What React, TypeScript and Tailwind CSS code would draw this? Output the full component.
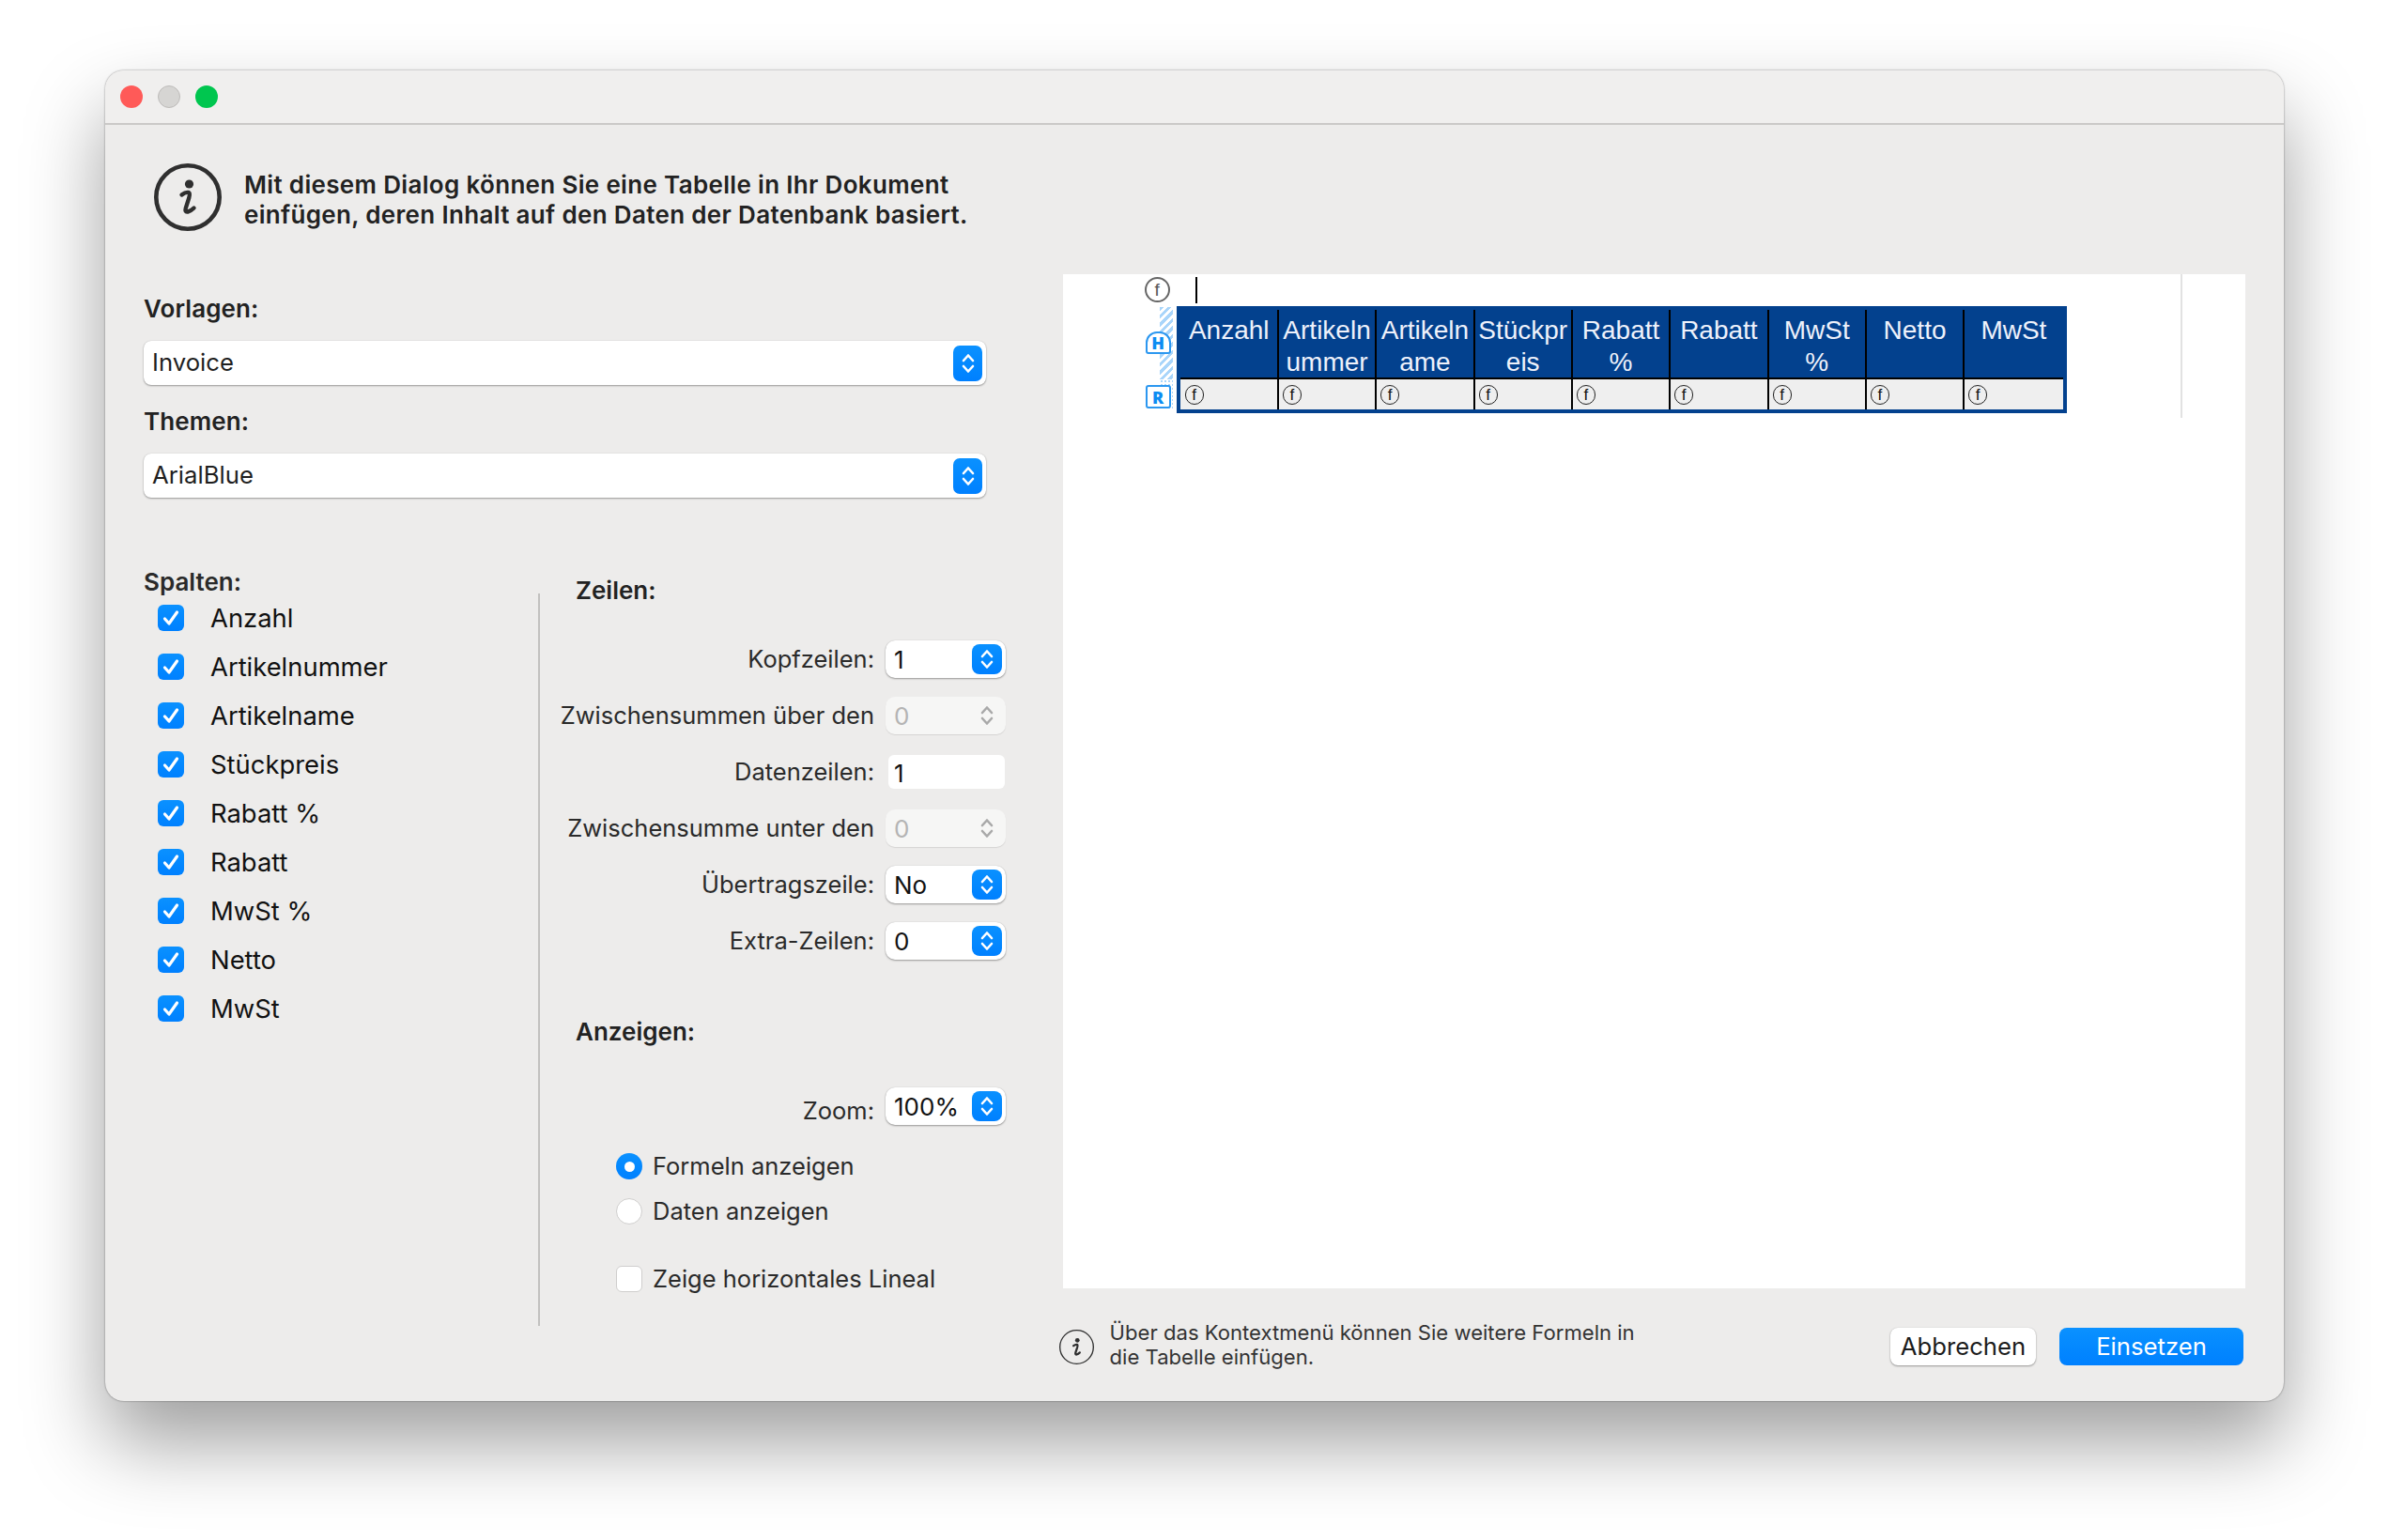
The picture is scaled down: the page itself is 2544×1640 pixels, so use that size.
import React from "react";

const columns = ["Anzahl", "Artikelnummer", "Artikelname", "Stückpreis", "Rabatt %", "Rabatt", "MwSt %", "Netto", "MwSt"];

const headerCells = [
  ["Anzahl"],
  ["Artikeln", "ummer"],
  ["Artikeln", "ame"],
  ["Stückpr", "eis"],
  ["Rabatt", "%"],
  ["Rabatt"],
  ["MwSt", "%"],
  ["Netto"],
  ["MwSt"],
];

function Chevrons({ color = "white" }: { color?: string }) {
  return (
    <svg width="14" height="24" viewBox="0 0 14 24" fill="none" stroke={color} strokeWidth="2.6" strokeLinecap="round" strokeLinejoin="round">
      <path d="M2 9 L7 3.5 L12 9" />
      <path d="M2 15 L7 20.5 L12 15" />
    </svg>
  );
}

function InfoIcon({ size, stroke }: { size: number; stroke: number }) {
  return (
    <svg width={size} height={size} viewBox="0 0 72 72" fill="none">
      <circle cx="36" cy="36" r={36 - stroke / 2} stroke="#2f2f2f" strokeWidth={stroke} />
      <circle cx="37.5" cy="22" r="4.6" fill="#2f2f2f" />
      <path d="M29.5 33.5 C32 31.5 35 30.5 37 31 C38.5 31.5 38 34 37.2 37 L33.8 47.5 C33 50.5 33.6 52 36 51.5 C38 51 40.5 49.5 42.5 47.5" stroke="#2f2f2f" strokeWidth="4.4" strokeLinecap="round" />
    </svg>
  );
}

function WideSelect({ value }: { value: string }) {
  return (
    <div className="flex h-[47px] w-[897px] items-center justify-between rounded-[8px] bg-white pl-[9px] pr-[4px] text-[25.7px] leading-[44px] text-[#1f1f1f] shadow-[0_1px_2px_rgba(0,0,0,0.35),0_0_1px_rgba(0,0,0,0.2)]">
      <span className="-mt-[2px]">{value}</span>
      <span className="flex h-[38px] w-[31px] items-center justify-center rounded-[7px] bg-gradient-to-b from-[#0b91ff] to-[#0080ff]">
        <Chevrons />
      </span>
    </div>
  );
}

function Stepper({ value, disabled }: { value: string; disabled?: boolean }) {
  if (disabled) {
    return (
      <div className="flex h-[40px] w-[128px] items-center justify-between rounded-[10px] bg-[#f6f6f5] pl-[9px] pr-[4px] text-[26px] text-[#b4b4b4] shadow-[0_1px_1px_rgba(0,0,0,0.1)]">
        <span>{value}</span>
        <span className="flex h-[32px] w-[32px] items-center justify-center">
          <Chevrons color="#a9a9a9" />
        </span>
      </div>
    );
  }
  return (
    <div className="flex h-[40px] w-[128px] items-center justify-between rounded-[10px] bg-white pl-[9px] pr-[4px] text-[26px] text-[#111111] shadow-[0_1px_2px_rgba(0,0,0,0.35),0_0_1px_rgba(0,0,0,0.2)]">
      <span>{value}</span>
      <span className="flex h-[32px] w-[32px] items-center justify-center rounded-[8px] bg-gradient-to-b from-[#0b91ff] to-[#0080ff]">
        <Chevrons />
      </span>
    </div>
  );
}

function FormRow({ label, children }: { label: string; children: React.ReactNode }) {
  return (
    <div className="flex h-[40px] items-center justify-end gap-[12px]">
      <span className="whitespace-nowrap text-[25.5px] text-[#2a2a2a]">{label}</span>
      {children}
    </div>
  );
}

function Formula({ tall }: { tall?: boolean }) {
  if (tall) {
    return (
      <span className="flex h-[21px] w-[20px] items-center justify-center rounded-full border border-[#222222] font-['Liberation_Sans',sans-serif] text-[17px] leading-none text-[#111111]">
        f
      </span>
    );
  }
  return (
    <span className="flex h-[27px] w-[27px] items-center justify-center rounded-full border-2 border-[#666666] font-['Liberation_Sans',sans-serif] text-[19px] leading-none text-[#555555]">
      f
    </span>
  );
}

function DocTable() {
  return (
    <div className="w-[948px] border-4 border-[#03418e] font-['Liberation_Sans',sans-serif]">
      <div className="grid h-[74px] grid-cols-9 border-b-2 border-black bg-[#03418e] pl-[1px]">
        {headerCells.map((lines, i) => (
          <div key={i} className={`pt-[5px] text-center text-[28px] leading-[34px] text-[#eef1fb] ${i < 8 ? "border-r-2 border-black" : ""}`}>
            {lines.map((line) => (
              <div key={line} className="whitespace-nowrap">
                {line}
              </div>
            ))}
          </div>
        ))}
      </div>
      <div className="grid h-[32px] grid-cols-9 bg-[#efefef] pl-[1px]">
        {headerCells.map((_, i) => (
          <div key={i} className={`flex items-center pl-[4px] ${i < 8 ? "border-r-2 border-black" : ""}`}>
            <Formula tall />
          </div>
        ))}
      </div>
    </div>
  );
}

export default function App() {
  return (
    <div className="min-h-[1640px] bg-white pl-[112px] pt-[75px] font-['Inter','Noto_Sans',sans-serif]">
      <div className="w-[2320px] overflow-hidden rounded-[20px] bg-[#edeceb] shadow-[0_44px_84px_rgba(0,0,0,0.38),0_0_2px_rgba(0,0,0,0.5)]">
        <div className="flex h-[58px] items-center gap-[16px] border-b-2 border-[#cbc9c7] bg-[#f0efee] pl-[16px]">
          <span className="h-[24px] w-[24px] rounded-full bg-[#ff5a58]" />
          <span className="h-[24px] w-[24px] rounded-full border border-[#bdbbb9] bg-[#d6d5d3]" />
          <span className="h-[24px] w-[24px] rounded-full bg-[#00c64f]" />
        </div>

        <div className="px-[41px]">
          <div className="flex h-[159px] gap-[24px] pl-[11px] pt-[41px]">
            <InfoIcon size={72} stroke={4.6} />
            <p className="mt-[7px] text-[26px] font-semibold leading-[32px] tracking-[0.33px] text-[#222222]">
              Mit diesem Dialog können Sie eine Tabelle in Ihr Dokument
              <br />
              einfügen, deren Inhalt auf den Daten der Datenbank basiert.
            </p>
          </div>

          <div className="flex">
            <div className="w-[979px]">
              <div className="mt-[21px] text-[26px] font-semibold leading-[32px] tracking-[0.1px] text-[#222222]">Vorlagen:</div>
              <div className="mt-[18px]">
                <WideSelect value="Invoice" />
              </div>
              <div className="mt-[23px] text-[26px] font-semibold leading-[32px] tracking-[0.1px] text-[#222222]">Themen:</div>
              <div className="mt-[18px]">
                <WideSelect value="ArialBlue" />
              </div>

              <div className="mt-[76px] flex">
                <div className="w-[420px]">
                  <div className="text-[26px] font-semibold leading-[28px] text-[#2a2a2a]">Spalten:</div>
                  <div className="ml-[15px] mt-[10px] flex flex-col gap-[24px]">
                    {columns.map((name) => (
                      <div key={name} className="flex h-[28px] items-center gap-[28px]">
                        <span className="flex h-[28px] w-[28px] items-center justify-center rounded-[6px] bg-gradient-to-b from-[#0b91ff] to-[#0080ff]">
                          <svg width="20" height="18" viewBox="0 0 20 18" fill="none" stroke="white" strokeWidth="3.2" strokeLinecap="round" strokeLinejoin="round">
                            <path d="M3.5 10 L8 15 L16.5 3" />
                          </svg>
                        </span>
                        <span className="pt-[2px] text-[27.4px] leading-none text-[#111111]">{name}</span>
                      </div>
                    ))}
                  </div>
                </div>

                <div className="mt-[26px] h-[780px] w-[2px] bg-[#c2c1bf]" />

                <div className="w-[496px] pl-[38px] pt-[7px]">
                  <div className="text-[26px] font-semibold leading-[32px] text-[#222222]">Zeilen:</div>
                  <div className="-ml-[30px] mt-[37px] flex flex-col gap-[20px]">
                    <FormRow label="Kopfzeilen:">
                      <Stepper value="1" />
                    </FormRow>
                    <FormRow label="Zwischensummen über den">
                      <Stepper value="0" disabled />
                    </FormRow>
                    <FormRow label="Datenzeilen:">
                      <div className="ml-[3px] mr-[1px] flex h-[36px] w-[124px] items-center rounded-[6px] bg-white pl-[6px] pt-[2px] text-[26px] text-[#111111]">1</div>
                    </FormRow>
                    <FormRow label="Zwischensumme unter den">
                      <Stepper value="0" disabled />
                    </FormRow>
                    <FormRow label="Übertragszeile:">
                      <Stepper value="No" />
                    </FormRow>
                    <FormRow label="Extra-Zeilen:">
                      <Stepper value="0" />
                    </FormRow>
                  </div>

                  <div className="mt-[61px] text-[26px] font-semibold leading-[32px] text-[#222222]">Anzeigen:</div>
                  <div className="mt-[43px] flex h-[40px] justify-end gap-[12px]">
                    <span className="pt-[6px] text-[25.5px] text-[#2a2a2a]">Zoom:</span>
                    <Stepper value="100%" />
                  </div>

                  <div className="ml-[43px] mt-[30px] flex h-[28px] items-center gap-[11px] text-[25.5px] text-[#2a2a2a]">
                    <span className="flex h-[28px] w-[28px] items-center justify-center rounded-full bg-gradient-to-b from-[#0b91ff] to-[#0080ff]">
                      <span className="h-[11px] w-[11px] rounded-full bg-white" />
                    </span>
                    Formeln anzeigen
                  </div>
                  <div className="ml-[43px] mt-[20px] flex h-[28px] items-center gap-[11px] text-[25.5px] text-[#2a2a2a]">
                    <span className="h-[28px] w-[28px] rounded-full border border-[#cfcecd] bg-white" />
                    Daten anzeigen
                  </div>
                  <div className="ml-[43px] mt-[44px] flex h-[28px] items-center gap-[11px] text-[25.5px] text-[#2a2a2a]">
                    <span className="h-[28px] w-[28px] rounded-[6px] border border-[#cfcecd] bg-white" />
                    Zeige horizontales Lineal
                  </div>
                </div>
              </div>
            </div>

            <div className="w-[1260px]">
              <div className="flex h-[1080px] items-start bg-white">
                <div className="w-[1190px] pl-[87px]">
                  <div className="flex h-[34px] items-start gap-[27px] pt-[3px]">
                    <Formula />
                    <span className="h-[28px] w-[2px] bg-black" />
                  </div>
                  <div className="flex">
                    <div className="relative h-[114px] w-[34px]">
                      <div className="absolute left-[16px] top-[1px] h-[77px] w-[14px] bg-[repeating-linear-gradient(135deg,#a9d5fa_0,#a9d5fa_3px,#ffffff_3px,#ffffff_6px)]" />
                      <div className="absolute left-[16px] top-[78px] h-[32px] w-[14px] bg-[radial-gradient(#a9d5fa_1.5px,#ffffff_1.5px)] bg-[length:4px_4px]" />
                      <div className="absolute left-[1px] top-[27px] flex h-[24px] w-[27px] items-center justify-center rounded-b-[3px] rounded-t-[12px] border-2 border-[#2b97f0] bg-white font-['Open_Sans',sans-serif] text-[18px] font-extrabold leading-none text-[#0c8cf2]">
                        H
                      </div>
                      <div className="absolute left-[1px] top-[84px] flex h-[25px] w-[27px] items-center justify-center rounded-[3px] border-2 border-[#2b97f0] bg-white font-['Open_Sans',sans-serif] text-[18px] font-extrabold leading-none text-[#0c8cf2]">
                        R
                      </div>
                    </div>
                    <DocTable />
                  </div>
                </div>
                <div className="h-[153px] w-[2px] bg-[#e2e2e2]" />
              </div>

              <div className="mb-[38px] ml-[-4px] mt-[42px] flex h-[40px] items-center">
                <InfoIcon size={37} stroke={2.6} />
                <p className="-mt-[5px] ml-[17px] text-[22.1px] leading-[26px] text-[#333333]">
                  Über das Kontextmenü können Sie weitere Formeln in
                  <br />
                  die Tabelle einfügen.
                </p>
                <button className="ml-auto flex h-[40px] w-[155px] items-center justify-center rounded-[8px] bg-white text-[25.7px] text-[#1c1c1c] shadow-[0_1px_2px_rgba(0,0,0,0.35),0_0_1px_rgba(0,0,0,0.2)]">
                  Abbrechen
                </button>
                <button className="ml-[25px] mr-[2px] flex h-[40px] w-[196px] items-center justify-center rounded-[8px] bg-gradient-to-b from-[#0b91ff] to-[#0080ff] text-[25.7px] text-white">
                  Einsetzen
                </button>
              </div>
            </div>
          </div>
        </div>
      </div>
    </div>
  );
}
